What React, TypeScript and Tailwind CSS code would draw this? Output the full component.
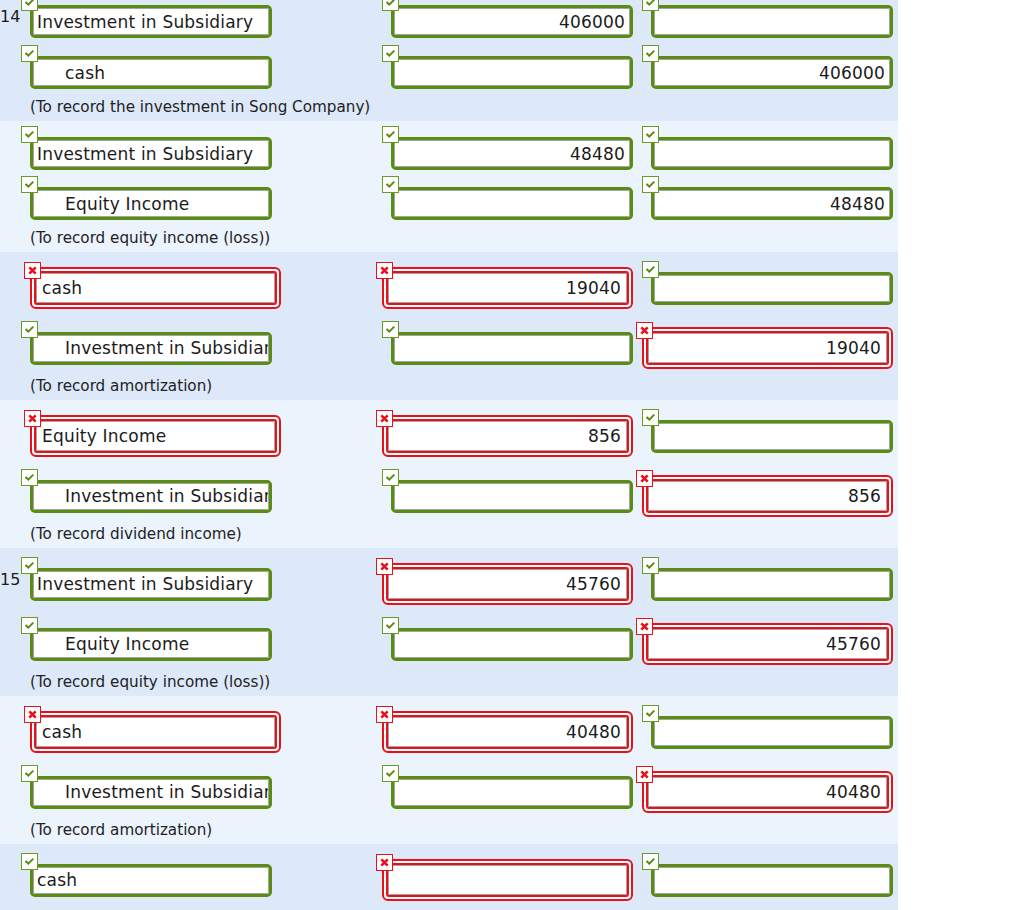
import React from "react";

type Field = { text: string; ok: boolean };
type RowData = { acc: Field & { indent?: boolean }; dr: Field; cr: Field };
type Band = {
  num?: string;
  bg: string;
  rows: RowData[];
  rowCls: string[];
  note?: string;
  noteCls: string;
};

const FONT = { fontFamily: '"DejaVu Sans", Verdana, sans-serif' };

function CheckIcon() {
  return (
    <svg width="17" height="17" viewBox="0 0 17 17" className="block">
      <rect x="0.5" y="0.5" width="16" height="16" fill="#ffffff" stroke="#6b9b25" strokeWidth="1" />
      <path d="M4.5 8 L7.3 10.6 L12.3 5.6" fill="none" stroke="#5b8c12" strokeWidth="2" />
    </svg>
  );
}

function CrossIcon() {
  return (
    <svg width="17" height="17" viewBox="0 0 17 17" className="block">
      <rect x="0.5" y="0.5" width="16" height="16" fill="#ffffff" stroke="#e8111a" strokeWidth="1" />
      <path d="M5.3 5.3 L11.7 11.7 M11.7 5.3 L5.3 11.7" fill="none" stroke="#e8111a" strokeWidth="2.6" />
    </svg>
  );
}

function Box({
  text,
  ok,
  right,
  indent,
}: {
  text: string;
  ok: boolean;
  right?: boolean;
  indent?: boolean;
}) {
  if (ok) {
    const pad = right ? "justify-end pr-[4px]" : indent ? "pl-[31px]" : "pl-[3px]";
    return (
      <div className="relative w-[242px] h-[33px]">
        <div className="w-full h-full rounded-[5px] border-[3px] border-[#5b8c12] bg-white">
          <div className="w-full h-full border border-[#a3a3a3] rounded-[2px] bg-white overflow-hidden">
            <div className={`h-full flex items-center pt-[2px] whitespace-nowrap ${pad}`}>{text}</div>
          </div>
        </div>
        <div className="absolute left-[-9px] top-[-11px] z-10">
          <CheckIcon />
        </div>
      </div>
    );
  }
  const pad = right ? "justify-end pr-[5px]" : indent ? "pl-[28px]" : "pl-[5px]";
  return (
    <div className="relative w-[251px] h-[42px]">
      <div className="w-full h-full rounded-[6px] border-2 border-[#e8111a] bg-white p-[2px]">
        <div className="w-full h-full rounded-[3px] border-2 border-[#e8111a] bg-white">
          <div className="w-full h-full border border-[#a3a3a3] bg-white overflow-hidden">
            <div className={`h-full flex items-center pt-[2px] whitespace-nowrap ${pad}`}>{text}</div>
          </div>
        </div>
      </div>
      <div className="absolute left-[-6px] top-[-5px] z-10">
        <CrossIcon />
      </div>
    </div>
  );
}

const G = (text = ""): Field => ({ text, ok: true });
const R = (text = ""): Field => ({ text, ok: false });

const RED_ROW = "h-[60px] pt-[12px]";
const RED_NOTE = "pt-[4px] pb-[4px]";

const bands: Band[] = [
  {
    num: "14",
    bg: "bg-[#dde8f8]",
    rows: [
      { acc: G("Investment in Subsidiary"), dr: G("406000"), cr: G() },
      { acc: { ...G("cash"), indent: true }, dr: G(), cr: G("406000") },
    ],
    rowCls: ["h-[38px] pt-[5px]", "h-[51px] pt-[18px]"],
    note: "(To record the investment in Song Company)",
    noteCls: "pt-[8px] pb-[4px]",
  },
  {
    bg: "bg-[#ebf3fd]",
    rows: [
      { acc: G("Investment in Subsidiary"), dr: G("48480"), cr: G() },
      { acc: { ...G("Equity Income"), indent: true }, dr: G(), cr: G("48480") },
    ],
    rowCls: ["h-[49px] pt-[16px]", "h-[50px] pt-[17px]"],
    note: "(To record equity income (loss))",
    noteCls: "pt-[8px] pb-[4px]",
  },
  {
    bg: "bg-[#dde8f8]",
    rows: [
      { acc: R("cash"), dr: R("19040"), cr: G() },
      { acc: { ...G("Investment in Subsidiary"), indent: true }, dr: G(), cr: R("19040") },
    ],
    rowCls: [RED_ROW, RED_ROW],
    note: "(To record amortization)",
    noteCls: RED_NOTE,
  },
  {
    bg: "bg-[#ebf3fd]",
    rows: [
      { acc: R("Equity Income"), dr: R("856"), cr: G() },
      { acc: { ...G("Investment in Subsidiary"), indent: true }, dr: G(), cr: R("856") },
    ],
    rowCls: [RED_ROW, RED_ROW],
    note: "(To record dividend income)",
    noteCls: RED_NOTE,
  },
  {
    num: "15",
    bg: "bg-[#dde8f8]",
    rows: [
      { acc: G("Investment in Subsidiary"), dr: R("45760"), cr: G() },
      { acc: { ...G("Equity Income"), indent: true }, dr: G(), cr: R("45760") },
    ],
    rowCls: [RED_ROW, RED_ROW],
    note: "(To record equity income (loss))",
    noteCls: RED_NOTE,
  },
  {
    bg: "bg-[#ebf3fd]",
    rows: [
      { acc: R("cash"), dr: R("40480"), cr: G() },
      { acc: { ...G("Investment in Subsidiary"), indent: true }, dr: G(), cr: R("40480") },
    ],
    rowCls: [RED_ROW, RED_ROW],
    note: "(To record amortization)",
    noteCls: RED_NOTE,
  },
  {
    bg: "bg-[#dde8f8]",
    rows: [{ acc: G("cash"), dr: R(), cr: G() }],
    rowCls: [RED_ROW],
    noteCls: "pb-[12px]",
  },
];

export default function App() {
  return (
    <div className="w-[1024px] min-h-[910px] bg-white overflow-hidden text-[#1b1b1b]" style={FONT}>
      <div className="w-[898px]">
        {bands.map((band, bi) => (
          <div key={bi} className={`${band.bg}`}>
            {band.rows.map((row, ri) => (
              <div
                key={ri}
                className={`grid grid-cols-[382px_251px_260px] items-center ${band.rowCls[ri]} text-[17px] tracking-[0.2px]`}
              >
                <div className="flex items-start">
                  <div className="w-[30px] pt-[2px] text-[16px] leading-[20px] tracking-normal">
                    {ri === 0 && band.num ? band.num : ""}
                  </div>
                  <Box text={row.acc.text} ok={row.acc.ok} indent={row.acc.indent} />
                </div>
                <div className="flex justify-end">
                  <Box text={row.dr.text} ok={row.dr.ok} right />
                </div>
                <div className="flex justify-end">
                  <Box text={row.cr.text} ok={row.cr.ok} right />
                </div>
              </div>
            ))}
            {band.note ? (
              <div className={`${band.noteCls} pl-[30px] text-[15.2px] leading-[20px] text-[#222222]`}>
                {band.note}
              </div>
            ) : (
              <div className={band.noteCls} />
            )}
          </div>
        ))}
      </div>
    </div>
  );
}
